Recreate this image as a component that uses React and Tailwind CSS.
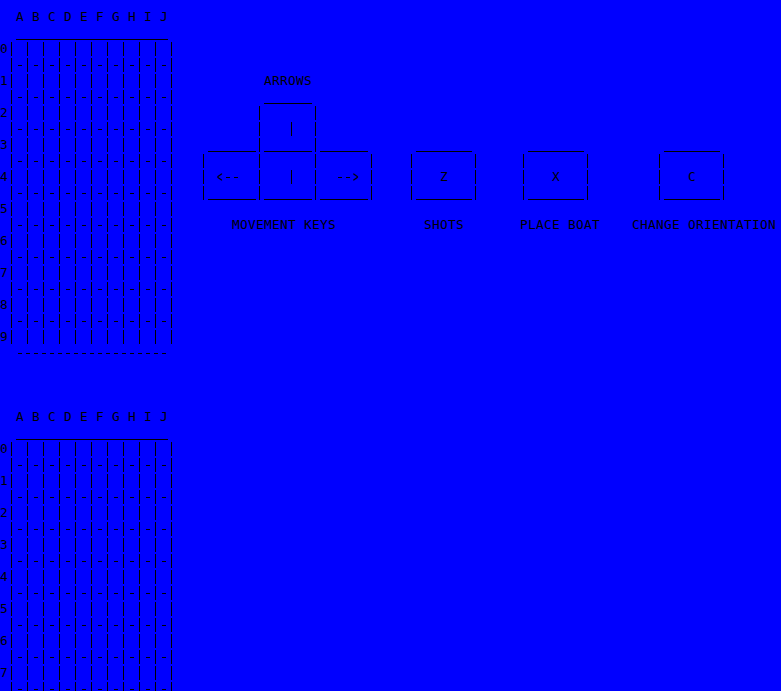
const COLUMNS = 'ABCDEFGHIJ'.split('')

const BAR_ROW = ' ' + '| '.repeat(10) + '|'
const DASH_ROW = ' ' + '|-'.repeat(10) + '|'

const BOARD = [
  '  ' + COLUMNS.join(' '),
  '  ' + '_'.repeat(19),
  ...COLUMNS.flatMap((_, i) => [
    i + BAR_ROW.slice(1),
    i < 9 ? DASH_ROW : '  ' + '-'.repeat(19),
  ]),
]

// Key legend, one string per console row.
const ARROW_KEYS = [
  '',
  '',
  '',
  '',
  '        ARROWS',
  '        ______',
  '       |      |',
  '       |   |  |',
  ' ______|______|______',
  '|      |      |      |',
  '| <--  |   |  |  --> |',
  '|______|______|______|',
  '',
  '    MOVEMENT KEYS',
]

const keyBox = (key, label, labelIndent, boxIndent) => {
  const pad = ' '.repeat(boxIndent)
  return [
    '', '', '', '', '', '', '', '',
    pad + ' _______',
    pad + '|       |',
    pad + '|   ' + key + '   |',
    pad + '|_______|',
    '',
    ' '.repeat(labelIndent) + label,
  ]
}

function Token({ text }) {
  if (text === '|') {
    return (
      <span className="flex h-4 w-2 shrink-0 pl-[3px] pt-px">
        <span className="h-3.5 w-px bg-black" />
      </span>
    )
  }
  if (text[0] === '_') {
    return (
      <span className="flex h-4 shrink-0 items-start pt-3.5">
        {text.split('').map((_, i) => (
          <span key={i} className="h-px w-2 bg-black" />
        ))}
      </span>
    )
  }
  if (text === '-') {
    return (
      <span className="flex h-4 w-2 shrink-0 pl-0.5 pt-2">
        <span className="h-px w-1 bg-black" />
      </span>
    )
  }
  if (text === '<' || text === '>') {
    return (
      <span className="w-2 shrink-0 scale-x-[0.7] scale-y-[1.2] text-center tracking-normal">{text}</span>
    )
  }
  return <span className="shrink-0">{text}</span>
}

function Screen({ rows, className = '' }) {
  return (
    <div className={className}>
      {rows.map((row, i) => (
        <div key={i} className="flex h-4 whitespace-pre">
          {(row.match(/[|<>-]|_+|[^|<>_-]+/g) || []).map((token, j) => (
            <Token key={j} text={token} />
          ))}
        </div>
      ))}
    </div>
  )
}

export default function App() {
  return (
    <main className="h-[691px] w-[781px] overflow-hidden bg-[#0000ff] pt-[9px] font-['DejaVu_Sans_Mono',monospace] text-[12.8px] leading-4 tracking-[0.294px] text-black">
      <div className="flex h-[400px]">
        <Screen rows={BOARD} className="w-[200px] shrink-0" />
        <Screen rows={ARROW_KEYS} className="w-[208px] shrink-0" />
        <Screen rows={keyBox('Z', 'SHOTS', 2, 0)} className="w-[112px] shrink-0" />
        <Screen rows={keyBox('X', 'PLACE BOAT', 0, 0)} className="w-[112px] shrink-0" />
        <Screen rows={keyBox('C', 'CHANGE ORIENTATION', 0, 3)} className="shrink-0" />
      </div>
      <Screen rows={BOARD.slice(0, 18)} />
    </main>
  )
}
